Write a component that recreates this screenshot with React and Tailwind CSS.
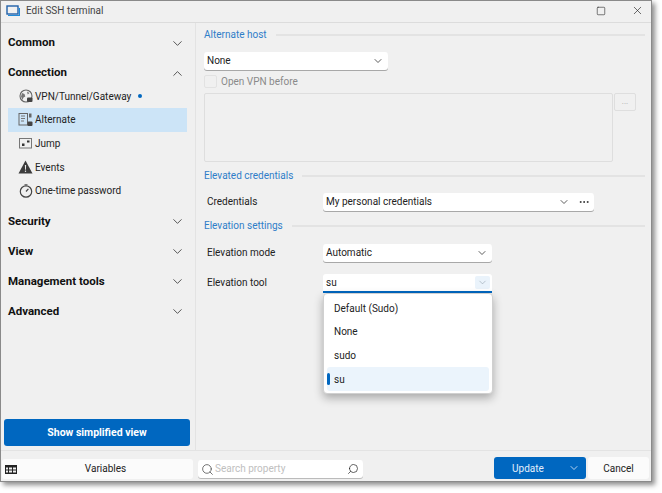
import React from "react";
import { ChevronDown, ChevronUp, Square, X, Ellipsis, Search } from "lucide-react";

function Group({ label, open }) {
  const Icon = open ? ChevronUp : ChevronDown;
  return (
    <div className="flex h-[30px] items-center justify-between pl-[7px] pr-[10px]">
      <span className="text-[11.5px] font-bold text-[#111]">{label}</span>
      <Icon size={15} strokeWidth={1.3} className="text-[#333]" />
    </div>
  );
}

function NavItem({ icon, label, active, dot }) {
  return (
    <div className={`ml-[7px] flex h-[23.6px] items-center gap-[2px] pl-[10px] ${active ? "w-[179px] bg-[#cce4f7]" : ""}`}>
      <span className="flex h-[15px] w-[15px] items-center justify-center text-[#444]">{icon}</span>
      <span className="text-[10px] text-[#222]">{label}</span>
      {dot && <span className="ml-[5px] h-[4px] w-[4px] rounded-full bg-[#0067c0]" />}
    </div>
  );
}

function Section({ label, className = "" }) {
  return (
    <div className={`flex h-[14px] items-center gap-[9px] ${className}`}>
      <span className="text-[10px] leading-[14px] text-[#2f7dc8]">{label}</span>
      <div className="mr-[6px] h-[2px] flex-1 bg-[#e3e3e3]" />
    </div>
  );
}

function Select({ value, className = "", extra }) {
  return (
    <div className={`flex h-[18px] items-center justify-between rounded-[3px] bg-white pl-[3px] pr-[4px] shadow-[0_1px_0_#a8a8a8] ${className}`}>
      <span className="pb-[2px] text-[10px] text-[#222]">{value}</span>
      <span className="flex items-center gap-[8px]">
        <ChevronDown size={12} strokeWidth={1.6} className="text-[#333]" />
        {extra}
      </span>
    </div>
  );
}

const VpnIcon = (
  <svg width="14" height="14" viewBox="0 0 14 14">
    <circle cx="7" cy="7" r="6" fill="none" stroke="#666" strokeWidth="1.1" />
    <path d="M3 4l2.5 1 .8 2.5-1.8 1-1 2.5-1.5-3.5zM8 2.5l2.5 1.5-1.8 1.5z" fill="#777" />
    <rect x="8" y="8.5" width="5.5" height="4.5" rx="1" fill="#444" />
  </svg>
);
const AlternateIcon = (
  <svg width="15" height="15" viewBox="0 0 15 15">
    <rect x="1" y="1.5" width="8.5" height="11.5" fill="none" stroke="#666" />
    <path d="M3 4h4M3 6.5h4M3 9h3" stroke="#777" />
    <path d="M11 1.5h2.5v4H11z" fill="#666" />
    <rect x="9.5" y="9.5" width="5" height="4.5" rx="1" fill="#444" />
  </svg>
);
const JumpIcon = (
  <svg width="14" height="12" viewBox="0 0 14 12">
    <rect x="0.5" y="1.5" width="12" height="9.5" fill="none" stroke="#777" />
    <rect x="3" y="6.5" width="2.5" height="2.5" fill="#333" />
    <rect x="8" y="3.5" width="2.5" height="2" fill="#333" />
  </svg>
);
const WarnIcon = (
  <svg width="15" height="14" viewBox="0 0 15 14">
    <path d="M7.5 0.5L14.5 13.5H0.5z" fill="#3c3c3c" />
    <path d="M6.9 5h1.2l-.2 4.8H7.1z" fill="#ededed" />
    <rect x="6.9" y="10.6" width="1.2" height="1.3" fill="#ededed" />
  </svg>
);
const TimerIcon = (
  <svg width="14" height="14" viewBox="0 0 14 14" fill="none" stroke="#444">
    <circle cx="7" cy="7.5" r="5.7" strokeWidth="1.2" />
    <path d="M5.5 0.8h3" strokeWidth="1" />
    <path d="M7 7.5l2.4-2.6" strokeWidth="1.2" />
  </svg>
);
const TableIcon = (
  <svg width="12" height="9" viewBox="0 0 12 9">
    <rect width="12" height="9" fill="#222" />
    <path d="M1 2.5h2v2H1zM4 2.5h3v2H4zM8 2.5h3v2H8zM1 5.5h2v2H1zM4 5.5h3v2H4zM8 5.5h3v2H8z" fill="#eee" />
  </svg>
);
const LaptopIcon = (
  <svg width="14" height="12" viewBox="0 0 14 12">
    <rect x="1" y="1" width="11" height="8" fill="none" stroke="#1f5fa8" strokeWidth="1.4" />
    <path d="M2 10.5h11.5V3" fill="none" stroke="#1f8ad8" strokeWidth="1.2" />
  </svg>
);

export default function App() {
  return (
    <div className="h-[493px] w-[662px] overflow-hidden bg-white" style={{ fontFamily: 'Roboto, "Noto Sans", sans-serif' }}>
      <div className="flex h-[482px] w-[652px] flex-col border border-[#8a8a8a] bg-[#f0f0f0] shadow-[3px_3px_5px_rgba(0,0,0,0.45)]">
        {/* title bar */}
        <div className="flex h-[22px] shrink-0 items-center justify-between border-b border-[#dcdcdc] pb-[2px] pl-[5px] pr-[7px]">
          <div className="flex items-center gap-[6px]">
            {LaptopIcon}
            <span className="text-[10px] text-[#444]">Edit SSH terminal</span>
          </div>
          <div className="flex items-center gap-[25px]">
            <Square size={10} strokeWidth={1.4} className="text-[#222]" />
            <X size={13} strokeWidth={1.2} className="text-[#222]" />
          </div>
        </div>

        <div className="flex min-h-0 flex-1">
          {/* sidebar */}
          <div className="flex w-[195px] shrink-0 flex-col border-r border-[#e3e3e3] pt-[5px]">
            <Group label="Common" />
            <Group label="Connection" open />
            <div className="-mt-[3.5px] mb-[4.5px] flex flex-col">
              <NavItem icon={VpnIcon} label="VPN/Tunnel/Gateway" dot />
              <NavItem icon={AlternateIcon} label="Alternate" active />
              <NavItem icon={JumpIcon} label="Jump" />
              <NavItem icon={WarnIcon} label="Events" />
              <NavItem icon={TimerIcon} label="One-time password" />
            </div>
            <Group label="Security" />
            <Group label="View" />
            <Group label="Management tools" />
            <Group label="Advanced" />
            <div className="mb-[4px] ml-[3px] mt-auto flex h-[27px] w-[186px] items-center justify-center rounded-[3px] bg-[#0067c0]">
              <span className="text-[10.5px] font-bold text-white">Show simplified view</span>
            </div>
          </div>

          {/* content */}
          <div className="relative flex-1 pl-[8px] pt-[5px]">
            <Section label="Alternate host" />
            <Select value="None" className="mt-[10px] w-[184px]" />
            <div className="mt-[5px] flex h-[13px] items-center gap-[4px]">
              <div className="h-[13px] w-[13px] rounded-[2px] border border-[#e2e2e2]" />
              <span className="text-[10px] text-[#8a8a8a]">Open VPN before</span>
            </div>
            <div className="mt-[5px] flex items-start gap-[1px]">
              <div className="h-[69px] w-[409px] rounded-[2px] border border-[#dedede]" />
              <div className="flex h-[18px] w-[22px] items-center justify-center rounded-[2px] border border-[#dedede] text-[8px] leading-none text-[#aaa]">...</div>
            </div>
            <Section label="Elevated credentials" className="mt-[7px]" />
            <div className="mt-[10px] flex items-center">
              <span className="w-[119px] pb-[2px] pl-[3px] text-[10px] text-[#222]">Credentials</span>
              <Select
                value="My personal credentials"
                className="w-[271px]"
                extra={<Ellipsis size={12} strokeWidth={2} className="text-[#333]" />}
              />
            </div>
            <Section label="Elevation settings" className="mt-[8px]" />
            <div className="mt-[11px] flex items-center">
              <span className="w-[119px] pb-[2px] pl-[3px] text-[10px] text-[#222]">Elevation mode</span>
              <Select value="Automatic" className="w-[169px]" />
            </div>
            <div className="mt-[12px] flex items-center">
              <span className="w-[119px] pb-[2px] pl-[3px] text-[10px] text-[#222]">Elevation tool</span>
              <div className="flex h-[19px] w-[169px] items-center justify-between rounded-t-[3px] border-b-2 border-[#0067c0] bg-white pl-[3px] pr-[2px]">
                <span className="text-[10px] text-[#222]">su</span>
                <span className="flex h-[13px] w-[15px] items-center justify-center rounded-[2px] bg-[#eaf3fb]">
                  <ChevronDown size={11} strokeWidth={1.4} className="text-[#9aa7b2]" />
                </span>
              </div>
            </div>

            {/* open dropdown */}
            <div className="absolute left-[127px] top-[270px] flex h-[101px] w-[170px] flex-col rounded-[4px] border border-[#d0d0d0] bg-white px-[3px] pb-[2px] pt-[2.5px] shadow-[0_4px_10px_rgba(0,0,0,0.3)]">
              {["Default (Sudo)", "None", "sudo"].map((t) => (
                <div key={t} className="flex h-[23.6px] items-center pl-[7px]">
                  <span className="text-[10px] text-[#222]">{t}</span>
                </div>
              ))}
              <div className="relative flex h-[23.6px] items-center rounded-[3px] bg-[#ebf4fc] pl-[7px]">
                <span className="absolute left-0 top-[6px] h-[12px] w-[2.5px] rounded-full bg-[#0067c0]" />
                <span className="text-[10px] text-[#222]">su</span>
              </div>
            </div>
          </div>
        </div>

        {/* footer */}
        <div className="flex h-[31px] shrink-0 items-end border-t border-[#e3e3e3] pb-[2px] pl-[1px] pr-[2px]">
          <div className="relative flex h-[20px] w-[191px] items-center justify-center rounded-[3px] bg-[#fbfbfb] pl-[16px]">
            <span className="absolute left-[3px] flex items-center">{TableIcon}</span>
            <span className="pb-[2px] text-[10px] text-[#222]">Variables</span>
          </div>
          <div className="mb-[1px] ml-[5px] flex h-[18px] w-[165px] items-center rounded-[3px] bg-white px-[3px] shadow-[0_1px_0_#bbb]">
            <Search size={13} strokeWidth={1.5} className="shrink-0 text-[#555]" />
            <span className="ml-[1px] flex-1 pb-[2px] text-[10px] text-[#c0c0c0]">Search property</span>
            <Search size={12} strokeWidth={1.4} className="mr-[1px] shrink-0 -scale-x-100 text-[#222]" />
          </div>
          <div className="ml-auto flex h-[22px] w-[92px] items-center rounded-[3px] bg-[#0067c0]">
            <span className="flex-1 pr-[6px] text-center text-[10px] text-[#e3eefb]">Update</span>
            <ChevronDown size={12} strokeWidth={1.6} className="mr-[6px] text-[#e3eefb]" />
          </div>
          <div className="ml-[2px] flex h-[22px] w-[61px] items-center justify-center rounded-[3px] bg-[#fbfbfb]">
            <span className="text-[10px] text-[#222]">Cancel</span>
          </div>
        </div>
      </div>
    </div>
  );
}
